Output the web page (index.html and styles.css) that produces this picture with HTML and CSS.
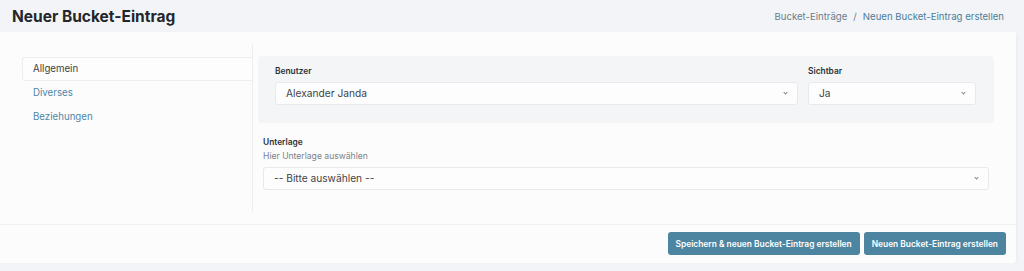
FILE: index.html
```html
<!DOCTYPE html>
<html lang="de">
<head>
  <meta charset="UTF-8">
  <meta name="viewport" content="width=device-width, initial-scale=1.0">
  <title>Neuer Bucket-Eintrag</title>
  <link rel="stylesheet" href="styles.css">
</head>
<body>
  <!-- Page header -->
  <div class="page-header">
    <h1>Neuer Bucket-Eintrag</h1>
    <div class="breadcrumb">
      <span>Bucket-Einträge</span>
      <span class="sep">/</span>
      <a href="#">Neuen Bucket-Eintrag erstellen</a>
    </div>
  </div>

  <!-- Form card -->
  <div class="card">
    <div class="card-body">
      <ul class="tabs">
        <li class="active">Allgemein</li>
        <li>Diverses</li>
        <li>Beziehungen</li>
      </ul>

      <div class="tab-content">
        <div class="group">
          <div class="field field-wide">
            <label>Benutzer</label>
            <div class="select">Alexander Janda</div>
          </div>
          <div class="field field-small">
            <label>Sichtbar</label>
            <div class="select">Ja</div>
          </div>
        </div>

        <div class="field single">
          <label>Unterlage</label>
          <div class="help">Hier Unterlage auswählen</div>
          <div class="select">-- Bitte auswählen --</div>
        </div>
      </div>
    </div>

    <div class="card-footer">
      <button class="btn">Speichern &amp; neuen Bucket-Eintrag erstellen</button>
      <button class="btn">Neuen Bucket-Eintrag erstellen</button>
    </div>
  </div>
</body>
</html>
```

FILE: styles.css
```css
body {
  font-family: Inter, 'Noto Sans', sans-serif;
  margin: 0;
  padding: 0;
  background: #f3f4f7;
  color: #2b2f33;
}

/* Header */
.page-header {
  height: 32px;
  display: flex;
  align-items: center;
  justify-content: space-between;
  padding: 0 20px 0 12px;
}

.page-header h1 {
  font-size: 15.5px;
  font-weight: 700;
  margin: 0;
  color: #23272b;
}

.breadcrumb {
  font-size: 9.6px;
  color: #6c7c8a;
  display: flex;
  gap: 6px;
}

.breadcrumb a {
  color: #4a7d99;
  text-decoration: none;
}

/* Card */
.card {
  background: #fcfcfd;
  width: 1016px;
  box-shadow: 0 2px 4px rgba(0, 0, 0, 0.06);
  border-radius: 0 0 3px 0;
}

.card-body {
  display: flex;
  padding: 12px 0 12px 22px;
}

.tabs {
  list-style: none;
  margin: 0;
  padding: 13px 0 0 0;
  width: 230px;
  border-right: 1px solid #eceef0;
  min-height: 155px;
}

.tabs li {
  font-size: 9.7px;
  color: #4f86a6;
  height: 22px;
  line-height: 22px;
  padding-left: 10px;
  border: 1px solid transparent;
  border-right: none;
}

.tabs li.active {
  color: #3a3f44;
  background: #fdfdfd;
  border-color: #eceef1;
  border-radius: 3px 0 0 3px;
}

.tab-content {
  flex: 1;
  padding: 12px 0 0 10px;
}

/* Grey field group */
.group {
  background: #f4f5f7;
  border-radius: 4px;
  width: 736px;
  display: flex;
  gap: 10px;
  padding: 10px 18px 16px 17px;
  margin-left: -5px;
  box-sizing: border-box;
  height: 67px;
}

.field label {
  display: block;
  font-size: 8.4px;
  font-weight: 600;
  color: #2d3136;
  margin-bottom: 6px;
}

.field-wide {
  width: 523px;
}

.field-small {
  width: 168px;
}

.select {
  height: 23px;
  box-sizing: border-box;
  background: #fdfdfd;
  border: 1px solid #e7e9ec;
  border-radius: 3px;
  font-size: 10.2px;
  line-height: 21px;
  padding-left: 10px;
  color: #3d4248;
  position: relative;
}

.select::after {
  content: '';
  position: absolute;
  right: 10px;
  top: 8px;
  width: 2px;
  height: 2px;
  border-right: 1px solid #80868c;
  border-bottom: 1px solid #80868c;
  transform: rotate(45deg);
}

.single {
  margin-top: 14px;
  width: 726px;
}

.single label {
  margin-bottom: 4px;
}

.help {
  font-size: 8.6px;
  color: #7b8288;
  margin-bottom: 6px;
}

/* Footer */
.card-footer {
  border-top: 1px solid #eff0f2;
  display: flex;
  justify-content: flex-end;
  gap: 4px;
  padding: 7px 10px 8px 0;
}

.btn {
  background: #4d84a0;
  color: #ffffff;
  border: none;
  border-radius: 3px;
  font-family: inherit;
  font-size: 8.4px;
  font-weight: 600;
  height: 23px;
  padding: 0 8px;
  cursor: pointer;
}
```
